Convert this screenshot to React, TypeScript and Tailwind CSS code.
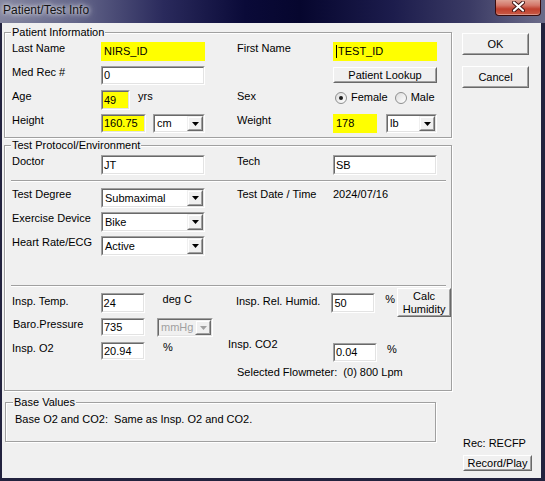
import React from "react";

const sunkOuter =
  "border border-t-[#a0a0a0] border-l-[#a0a0a0] border-r-white border-b-white";
const sunkInner =
  "border border-t-[#696969] border-l-[#696969] border-r-[#e3e3e3] border-b-[#e3e3e3]";

function TextBox({
  className = "",
  value,
  fill = "bg-white",
  hl = false,
  caret = false,
}: {
  className?: string;
  value: string;
  fill?: string;
  hl?: boolean;
  caret?: boolean;
}) {
  return (
    <div
      className={`${
        hl ? "border border-[#ffff00]" : sunkOuter
      } flex ${className}`}
    >
      <div
        className={`${
          hl ? "border border-[#ffff00]" : sunkInner
        } ${fill} flex-1 flex items-center pl-[1px] overflow-hidden`}
      >
        {caret && <span className="w-px h-[13px] bg-black mr-[1px]" />}
        <span className="leading-[13px] whitespace-pre">{value}</span>
      </div>
    </div>
  );
}

function Arrow({ disabled = false }: { disabled?: boolean }) {
  return (
    <div className="w-[16px] border border-t-[#f0f0f0] border-l-[#f0f0f0] border-r-[#696969] border-b-[#696969] flex">
      <div className="flex-1 border border-t-white border-l-white border-r-[#a0a0a0] border-b-[#a0a0a0] bg-[#f0f0f0] flex items-center justify-center">
        <svg width="7" height="4" viewBox="0 0 7 4">
          <polygon points="0,0 7,0 3.5,4" fill={disabled ? "#a0a0a0" : "#000"} />
        </svg>
      </div>
    </div>
  );
}

function Combo({
  className = "",
  value,
  disabled = false,
}: {
  className?: string;
  value: string;
  disabled?: boolean;
}) {
  return (
    <div className={`${sunkOuter} flex ${className}`}>
      <div
        className={`${sunkInner} ${
          disabled ? "bg-[#f0f0f0] text-[#a0a0a0]" : "bg-white"
        } flex-1 flex items-stretch`}
      >
        <div className="flex-1 flex items-center pl-[2px] leading-[13px] overflow-hidden">
          {value}
        </div>
        <Arrow disabled={disabled} />
      </div>
    </div>
  );
}

function Btn({
  className = "",
  children,
}: {
  className?: string;
  children: React.ReactNode;
}) {
  return (
    <button
      type="button"
      className={`flex border border-t-white border-l-white border-r-[#696969] border-b-[#696969] bg-[#f0f0f0] p-0 ${className}`}
    >
      <span className="flex-1 flex flex-col items-center justify-center border border-t-[#f0f0f0] border-l-[#f0f0f0] border-r-[#a0a0a0] border-b-[#a0a0a0] leading-[13px] text-center">
        {children}
      </span>
    </button>
  );
}

function Radio({ checked }: { checked: boolean }) {
  return (
    <div className="w-[12px] h-[12px] mt-[2px] rounded-full border border-[#8e8f8f] bg-[linear-gradient(135deg,#dcdcdc,#ffffff)] flex items-center justify-center">
      {checked && <div className="w-[4px] h-[4px] rounded-full bg-[#1c1c1c]" />}
    </div>
  );
}

const groupBox =
  "border border-[#a0a0a0] shadow-[1px_1px_0_#ffffff,inset_1px_1px_0_#ffffff]";

export default function App() {
  return (
    <div className="w-[545px] h-[481px] bg-[#22223e] flex flex-col font-['Liberation_Sans',Arial,sans-serif] text-[11px] text-black overflow-hidden">
      {/* Title bar */}
      <div className="h-[23px] flex items-start bg-[linear-gradient(90deg,#83859f_0%,#64668a_14%,#2a2a5c_30%,#0a0a38_45%,#06062e_55%,#1c1c4c_72%,#3a3a64_86%,#6c6c8a_100%)]">
        <div className="pl-[3px] pt-[3px] text-[12px] leading-[15px] text-[#141414] [text-shadow:0_0_4px_#ffffff,0_0_8px_rgba(255,255,255,0.8)]">
          Patient/Test Info
        </div>
        <div className="ml-auto mr-[4px] w-[46px] h-[16px] rounded-b-[4px] border border-t-0 border-[#3a0c0c] bg-[linear-gradient(180deg,#dfa294_0%,#d4786a_35%,#c0402e_60%,#c85a46_100%)] flex justify-center shadow-[inset_0_-1px_0_rgba(255,255,255,0.35)]">
          <svg width="13" height="11" viewBox="0 0 13 11" className="mt-[1px]">
            <path d="M2 1.5 L11 9.5 M11 1.5 L2 9.5" stroke="#3b1010" strokeWidth="4" strokeLinecap="round" />
            <path d="M2 1.5 L11 9.5 M11 1.5 L2 9.5" stroke="#ffffff" strokeWidth="2.2" strokeLinecap="round" />
          </svg>
        </div>
      </div>

      {/* Client area */}
      <div className="ml-[2px] w-[539px] h-[455px] bg-[#f0f0f0] flex">
        {/* Left column */}
        <div className="w-[460px] pl-[2px] flex flex-col">
          {/* Patient Information */}
          <div className={`mt-[9px] w-[448px] ${groupBox}`}>
            <div className="-mt-[7px] ml-[6px] w-fit px-[1px] bg-[#f0f0f0] leading-[13px]">
              Patient Information
            </div>
            <div className="pt-[3px] pb-[4px] flex flex-col gap-[5px]">
              <div className="flex h-[19px] pl-[7px]">
                <div className="w-[89px] leading-[13px]">Last Name</div>
                <div className="w-[136px]">
                  <TextBox className="w-[104px] h-[19px]" hl fill="bg-[#ffff00]" value="NIRS_ID" />
                </div>
                <div className="w-[96px] leading-[13px]">First Name</div>
                <TextBox className="w-[104px] h-[19px]" hl caret fill="bg-[#ffff00]" value="TEST_ID" />
              </div>
              <div className="flex h-[19px] pl-[7px]">
                <div className="w-[89px] leading-[13px]">Med Rec #</div>
                <div className="w-[136px]">
                  <TextBox className="w-[104px] h-[19px]" value="0" />
                </div>
                <div className="w-[96px]" />
                <Btn className="w-[104px] h-[16px] mt-[1px]">Patient Lookup</Btn>
              </div>
              <div className="flex h-[19px] pl-[7px]">
                <div className="w-[89px] leading-[13px]">Age</div>
                <div className="w-[136px] flex items-start">
                  <TextBox className="w-[29px] h-[20px]" fill="bg-[#ffff00]" value="49" />
                  <div className="ml-[8px] leading-[13px]">yrs</div>
                </div>
                <div className="w-[96px] leading-[13px]">Sex</div>
                <div className="flex items-start pl-[2px]">
                  <Radio checked />
                  <div className="ml-[4px] leading-[13px] mt-[1px]">Female</div>
                  <div className="ml-[7px]">
                    <Radio checked={false} />
                  </div>
                  <div className="ml-[4px] leading-[13px] mt-[1px]">Male</div>
                </div>
              </div>
              <div className="flex h-[19px] pl-[7px]">
                <div className="w-[89px] leading-[13px]">Height</div>
                <div className="w-[136px] flex items-start">
                  <TextBox className="w-[45px] h-[19px]" fill="bg-[#ffff00]" value="160.75" />
                  <Combo className="ml-[7px] w-[52px] h-[19px]" value="cm" />
                </div>
                <div className="w-[96px] leading-[13px]">Weight</div>
                <div className="flex items-start">
                  <TextBox className="w-[44px] h-[19px]" hl fill="bg-[#ffff00]" value="178" />
                  <Combo className="ml-[9px] w-[51px] h-[19px]" value="lb" />
                </div>
              </div>
            </div>
          </div>

          {/* Test Protocol/Environment */}
          <div className={`mt-[7px] w-[448px] ${groupBox}`}>
            <div className="-mt-[7px] ml-[6px] w-fit px-[1px] bg-[#f0f0f0] leading-[13px]">
              Test Protocol/Environment
            </div>
            <div className="pt-[3px] pb-[11px] flex flex-col">
              <div className="flex h-[20px] pl-[7px]">
                <div className="w-[89px] leading-[13px]">Doctor</div>
                <div className="w-[136px]">
                  <TextBox className="w-[104px] h-[20px]" value="JT" />
                </div>
                <div className="w-[96px] leading-[13px]">Tech</div>
                <TextBox className="w-[104px] h-[20px]" value="SB" />
              </div>

              <div className="mt-[5px] ml-[6px] w-[435px] h-[2px] border-t border-t-[#a0a0a0] border-b border-b-white" />

              <div className="mt-[6px] flex flex-col gap-[4px]">
                <div className="flex h-[20px] pl-[7px]">
                  <div className="w-[89px] leading-[13px]">Test Degree</div>
                  <div className="w-[136px]">
                    <Combo className="w-[104px] h-[20px]" value="Submaximal" />
                  </div>
                  <div className="w-[96px] leading-[13px]">Test Date / Time</div>
                  <div className="leading-[13px]">2024/07/16</div>
                </div>
                <div className="flex h-[20px] pl-[7px]">
                  <div className="w-[89px] leading-[13px]">Exercise Device</div>
                  <Combo className="w-[104px] h-[20px]" value="Bike" />
                </div>
                <div className="flex h-[20px] pl-[7px]">
                  <div className="w-[89px] leading-[13px]">Heart Rate/ECG</div>
                  <Combo className="w-[104px] h-[20px]" value="Active" />
                </div>
              </div>

              <div className="mt-[29px] ml-[6px] w-[435px] h-[2px] border-t border-t-[#a0a0a0] border-b border-b-white" />

              <div className="mt-[6px] flex h-[20px] pl-[7px]">
                <div className="w-[89px] leading-[13px] mt-[2px]">Insp. Temp.</div>
                <div className="w-[136px] flex items-start">
                  <TextBox className="w-[44px] h-[20px]" value="24" />
                  <div className="ml-[18px] leading-[13px]">deg C</div>
                </div>
                <div className="w-[96px] leading-[13px] mt-[2px]">Insp. Rel. Humid.</div>
                <TextBox className="w-[44px] h-[20px]" value="50" />
                <div className="w-[22px] pl-[10px] leading-[13px]">%</div>
                <Btn className="w-[54px] h-[29px] -mt-[5px]">
                  <span>Calc</span>
                  <span>Humidity</span>
                </Btn>
              </div>

              <div className="mt-[5px] flex h-[19px] pl-[7px]">
                <div className="w-[89px] leading-[13px] pl-[1px]">Baro.Pressure</div>
                <div className="flex items-start">
                  <TextBox className="w-[44px] h-[18px]" value="735" />
                  <Combo className="ml-[12px] w-[56px] h-[19px]" value="mmHg" disabled />
                </div>
              </div>

              <div className="mt-[5px] flex h-[19px] pl-[7px]">
                <div className="w-[89px] leading-[13px]">Insp. O2</div>
                <div className="w-[127px] flex items-start">
                  <TextBox className="w-[44px] h-[18px]" value="20.94" />
                  <div className="ml-[18px] leading-[13px] -mt-[1px]">%</div>
                </div>
                <div className="w-[105px] leading-[13px] -mt-[4px]">Insp. CO2</div>
                <TextBox className="w-[44px] h-[19px] mt-[1px]" value="0.04" />
                <div className="ml-[10px] leading-[13px] mt-[1px]">%</div>
              </div>

              <div className="mt-[5px] pl-[232px] leading-[13px] whitespace-pre">
                {"Selected Flowmeter:  (0) 800 Lpm"}
              </div>
            </div>
          </div>

          {/* Base Values */}
          <div className={`mt-[11px] ml-[1px] w-[431px] ${groupBox}`}>
            <div className="-mt-[7px] ml-[7px] w-fit px-[1px] bg-[#f0f0f0] leading-[13px]">
              Base Values
            </div>
            <div className="pt-[4px] pb-[15px] pl-[9px] leading-[13px] whitespace-pre">
              {"Base O2 and CO2:  Same as Insp. O2 and CO2."}
            </div>
          </div>
        </div>

        {/* Right column */}
        <div className="flex-1 flex flex-col pb-[7px]">
          <Btn className="mt-[10px] w-[67px] h-[22px]">OK</Btn>
          <Btn className="mt-[11px] w-[67px] h-[22px]">Cancel</Btn>
          <div className="mt-auto pl-[1px] leading-[13px]">Rec: RECFP</div>
          <Btn className="mt-[5px] ml-[1px] w-[69px] h-[16px]">Record/Play</Btn>
        </div>
      </div>
    </div>
  );
}
